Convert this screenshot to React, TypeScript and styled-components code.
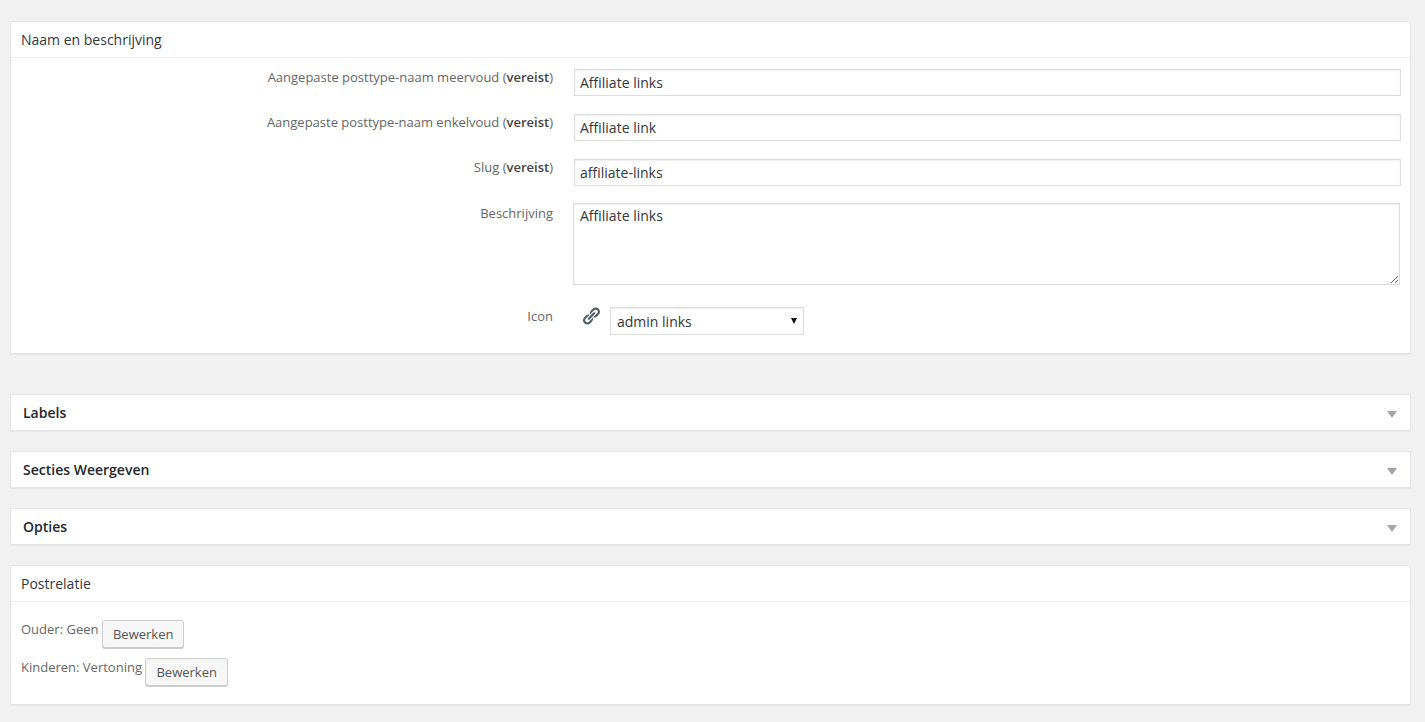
import React from 'react';
import styled, { createGlobalStyle } from 'styled-components';

const GlobalStyle = createGlobalStyle`
  html, body {
    margin: 0;
    padding: 0;
    background: #f1f1f1;
  }
  body {
    font-family: "Open Sans", "Liberation Sans", sans-serif;
    font-size: 13px;
    color: #444;
  }
`;

const Page = styled.div`
  width: 1425px;
  height: 722px;
  overflow: hidden;
  box-sizing: border-box;
  padding: 21px 14px 0 10px;
  display: flex;
  flex-direction: column;
`;

const Card = styled.section<{ $gap?: number }>`
  background: #fff;
  border: 1px solid #e5e5e5;
  box-shadow: 0 1px 1px rgba(0, 0, 0, 0.04);
  margin-bottom: ${(p) => p.$gap ?? 20}px;
`;

const CardTitle = styled.h2`
  margin: 0;
  height: 36px;
  box-sizing: border-box;
  padding-left: 10px;
  border-bottom: 1px solid #eee;
  font-size: 14px;
  font-weight: 400;
  line-height: 36px;
  color: #32373c;
`;

const FormBody = styled.div`
  display: flex;
  flex-direction: column;
  padding: 11px 9px 18px 0;
`;

const Row = styled.div<{ $height: number }>`
  display: grid;
  grid-template-columns: 542px 1fr;
  column-gap: 21px;
  height: ${(p) => p.$height}px;
`;

const Label = styled.label<{ $top?: number }>`
  margin-top: ${(p) => p.$top ?? 0}px;
  text-align: right;
  font-size: 13px;
  line-height: 18px;
  color: #666;

  b {
    font-weight: 600;
    color: #444;
  }
`;

const TextInput = styled.input`
  width: 100%;
  height: 27px;
  box-sizing: border-box;
  margin: 0;
  padding: 0 5px;
  border: 1px solid #ddd;
  box-shadow: inset 0 1px 2px rgba(0, 0, 0, 0.07);
  font-family: inherit;
  font-size: 14px;
  color: #32373c;
  background: #fff;
  outline: none;
`;

const TextArea = styled.textarea`
  display: block;
  width: 827px;
  height: 82px;
  box-sizing: border-box;
  margin: 0 0 0 -1px;
  padding: 2px 6px;
  border: 1px solid #ddd;
  box-shadow: inset 0 1px 2px rgba(0, 0, 0, 0.07);
  font-family: inherit;
  font-size: 14px;
  line-height: 20px;
  color: #32373c;
  background: #fff;
  outline: none;
`;

const IconField = styled.div`
  display: flex;
  align-items: flex-start;
  gap: 9px;
  margin-left: 7px;
`;

const LinkIcon = styled.svg`
  width: 20px;
  height: 20px;
  margin-top: -1px;
  fill: #555d66;
  flex: none;
`;

const SelectWrap = styled.div`
  position: relative;
  width: 194px;
  height: 28px;

  &::after {
    content: '';
    position: absolute;
    right: 7px;
    top: 11px;
    width: 0;
    height: 0;
    border-left: 3.5px solid transparent;
    border-right: 3.5px solid transparent;
    border-top: 6px solid #111;
    pointer-events: none;
  }
`;

const Select = styled.select`
  appearance: none;
  width: 100%;
  height: 100%;
  box-sizing: border-box;
  margin: 0;
  padding: 0 6px;
  border: 1px solid #ddd;
  border-radius: 0;
  box-shadow: inset 0 1px 2px rgba(0, 0, 0, 0.07);
  font-family: inherit;
  font-size: 14px;
  color: #32373c;
  background: #fff;
  outline: none;
`;

const Toggle = styled.div`
  height: 35px;
  display: flex;
  align-items: center;
  justify-content: space-between;
  padding: 0 13px 0 12px;
  font-size: 14px;
  font-weight: 600;
  color: #23282d;
`;

const Caret = styled.span`
  width: 0;
  height: 0;
  margin-top: 3px;
  border-left: 5px solid transparent;
  border-right: 5px solid transparent;
  border-top: 7px solid #a0a5aa;
`;

const RelationBody = styled.div`
  display: flex;
  flex-direction: column;
  gap: 10px;
  padding: 18px 10px 18px;
`;

const RelationRow = styled.div`
  display: flex;
  align-items: flex-start;
  gap: 3.5px;
  height: 28px;
  line-height: 18px;
  color: #666;
`;

const Button = styled.button`
  height: 28px;
  box-sizing: border-box;
  margin: 0;
  padding: 0 10px;
  border: 1px solid #ccc;
  border-radius: 3px;
  background: #f7f7f7;
  box-shadow: 0 1px 0 #ccc;
  font-family: inherit;
  font-size: 13px;
  line-height: 26px;
  color: #555;
`;

const collapsed = ['Labels', 'Secties Weergeven', 'Opties'];

const App = () => {
  return (
    <>
      <GlobalStyle />
      <Page>
        <Card $gap={40}>
          <CardTitle>Naam en beschrijving</CardTitle>
          <FormBody>
            <Row $height={45}>
              <Label $top={-1}>Aangepaste posttype-naam meervoud (<b>vereist</b>)</Label>
              <TextInput defaultValue="Affiliate links" />
            </Row>
            <Row $height={45}>
              <Label $top={-1}>Aangepaste posttype-naam enkelvoud (<b>vereist</b>)</Label>
              <TextInput defaultValue="Affiliate link" />
            </Row>
            <Row $height={44}>
              <Label $top={-1}>Slug (<b>vereist</b>)</Label>
              <TextInput defaultValue="affiliate-links" />
            </Row>
            <Row $height={104}>
              <Label $top={1}>Beschrijving</Label>
              <TextArea defaultValue="Affiliate links" />
            </Row>
            <Row $height={28}>
              <Label>Icon</Label>
              <IconField>
                <LinkIcon viewBox="0 0 20 20">
                  <path d="M17.74 2.76c1.68 1.69 1.68 4.41 0 6.1l-1.53 1.52c-1.12 1.12-2.7 1.47-4.14 1.09l2.62-2.61.76-.77.76-.76c.84-.84.84-2.2 0-3.04-.84-.85-2.2-.85-3.04 0l-.77.76-3.38 3.38c-.37-1.44-.02-3.02 1.1-4.14l1.52-1.53c1.69-1.68 4.42-1.68 6.1 0zM8.59 13.43l5.34-5.34c.42-.42.42-1.1 0-1.52-.44-.43-1.13-.39-1.53 0l-5.33 5.34c-.42.42-.42 1.1 0 1.52.44.43 1.13.39 1.52 0zm-.76 2.29l4.14-4.15c.38 1.44.03 3.02-1.09 4.14l-1.52 1.53c-1.69 1.68-4.41 1.68-6.1 0-1.68-1.68-1.68-4.42 0-6.1l1.53-1.52c1.12-1.12 2.7-1.47 4.14-1.1l-4.14 4.15c-.85.84-.85 2.2 0 3.05.84.84 2.2.84 3.04 0z" />
                </LinkIcon>
                <SelectWrap>
                  <Select defaultValue="links">
                    <option value="links">admin links</option>
                  </Select>
                </SelectWrap>
              </IconField>
            </Row>
          </FormBody>
        </Card>

        {collapsed.map((title) => (
          <Card key={title}>
            <Toggle>
              {title}
              <Caret />
            </Toggle>
          </Card>
        ))}

        <Card>
          <CardTitle>Postrelatie</CardTitle>
          <RelationBody>
            <RelationRow>
              Ouder: Geen <Button>Bewerken</Button>
            </RelationRow>
            <RelationRow>
              Kinderen: Vertoning <Button>Bewerken</Button>
            </RelationRow>
          </RelationBody>
        </Card>
      </Page>
    </>
  );
};

export default App;
